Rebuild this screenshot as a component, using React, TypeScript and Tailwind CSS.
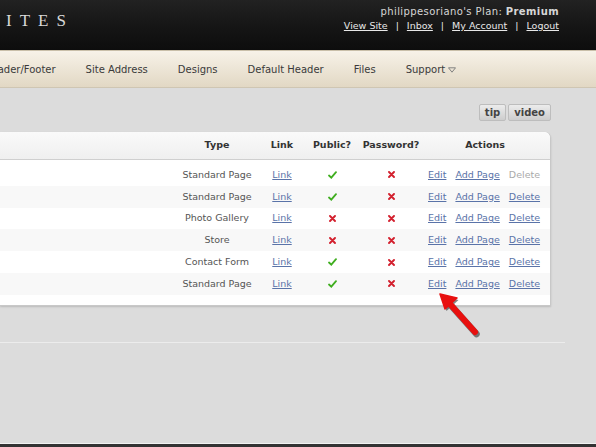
import React from 'react'

const NAV = ['Header/Footer', 'Site Address', 'Designs', 'Default Header', 'Files']

type Row = { type: string; pub: boolean; del: boolean }

const ROWS: Row[] = [
  { type: 'Standard Page', pub: true, del: false },
  { type: 'Standard Page', pub: true, del: true },
  { type: 'Photo Gallery', pub: false, del: true },
  { type: 'Store', pub: false, del: true },
  { type: 'Contact Form', pub: true, del: true },
  { type: 'Standard Page', pub: true, del: true },
]

function Check() {
  return (
    <svg width="9" height="8" viewBox="0 0 9 8" className="inline-block">
      <path d="M1 4.5 L3.3 6.6 L8 1.2" fill="none" stroke="#3fae1f" strokeWidth="1.8" strokeLinecap="round" />
    </svg>
  )
}

function Cross() {
  return (
    <svg width="7" height="7" viewBox="0 0 7 7" className="inline-block">
      <path d="M1 1 L6 6 M6 1 L1 6" fill="none" stroke="#d3202e" strokeWidth="1.9" strokeLinecap="round" />
    </svg>
  )
}

const link = 'text-[#5a73a8] underline underline-offset-1'

export default function App() {
  return (
    <div className="relative w-[596px] h-[447px] overflow-hidden bg-[#dcdcdc] flex flex-col font-['DejaVu_Sans',sans-serif]">
      <header className="h-[50px] shrink-0 bg-gradient-to-b from-[#222] via-[#161616] to-[#0d0d0d] flex justify-between pl-[6px] pr-[37px]">
        <div className="pt-[8px] text-[17px] tracking-[8px] text-[#d8d8d8] font-['Liberation_Serif',serif]">ITES</div>
        <div className="flex flex-col items-end pt-[5px] text-[#d6d6d6]">
          <div className="text-[10px] tracking-[0.4px] leading-[14px]">
            philippesoriano's Plan: <span className="font-bold">Premium</span>
          </div>
          <div className="flex gap-[8px] text-[9.5px] leading-[13px] text-[#e8e8e8]">
            <span className="underline">View Site</span>
            <span>|</span>
            <span className="underline">Inbox</span>
            <span>|</span>
            <span className="underline">My Account</span>
            <span>|</span>
            <span className="underline">Logout</span>
          </div>
        </div>
      </header>

      <nav className="h-[38px] shrink-0 bg-gradient-to-b from-[#f7f2e8] to-[#e2d8c4] border-t border-[#c9bfa9] border-b border-b-[#cfc6b3] flex items-center gap-[30px] ml-[-16px] pt-px text-[10px] text-[#3a3a3a]">
        {NAV.map(n => (
          <span key={n} className="whitespace-nowrap">{n}</span>
        ))}
        <span className="flex items-center gap-[3px] whitespace-nowrap">
          Support
          <svg width="8" height="6" viewBox="0 0 8 6">
            <path d="M0.5 0.8 L7.5 0.8 L4 5.2 Z" fill="none" stroke="#777" strokeWidth="0.9" />
          </svg>
        </span>
      </nav>

      <main className="flex-1 flex flex-col">
        <div className="flex justify-end gap-[2px] pr-[45px] pt-[16px] h-[44px]">
          {['tip', 'video'].map(b => (
            <span
              key={b}
              className="h-[17px] px-[5px] flex items-center rounded-[2px] border border-[#bdbdbd] bg-gradient-to-b from-[#ececec] to-[#cdcdcd] text-[10px] font-bold text-[#444]"
            >
              {b}
            </span>
          ))}
        </div>

        <div className="w-[551px] bg-white rounded-tr-[6px] border-r border-b border-[#c8c8c8] shadow-[0_1px_2px_rgba(0,0,0,0.15)] pb-[10px] text-[9.5px]">
          <div className="flex h-[28px] items-center bg-gradient-to-b from-[#fafafa] to-[#efefef] border-b border-[#cfcfcf] rounded-tr-[6px] font-bold text-[#333] mb-[4px]">
            <span className="w-[180px]" />
            <span className="w-[74px] text-center">Type</span>
            <span className="w-[56px] text-center">Link</span>
            <span className="w-[44px] text-center">Public?</span>
            <span className="w-[74px] text-center">Password?</span>
            <span className="w-[114px] text-center">Actions</span>
          </div>
          {ROWS.map((r, i) => (
            <div key={i} className={`flex h-[21.8px] items-center ${i % 2 === 0 ? 'bg-white' : 'bg-[#f8f8f8]'}`}>
              <span className="w-[180px]" />
              <span className="w-[74px] text-center text-[#555] whitespace-nowrap">{r.type}</span>
              <span className="w-[56px] text-center"><span className={link}>Link</span></span>
              <span className="w-[44px] flex justify-center">{r.pub ? <Check /> : <Cross />}</span>
              <span className="w-[74px] flex justify-center"><Cross /></span>
              <span className="flex gap-[9px] whitespace-nowrap">
                <span className={link}>Edit</span>
                <span className={link}>Add Page</span>
                <span className={r.del ? link : 'text-[#aaa]'}>Delete</span>
              </span>
            </div>
          ))}
        </div>

        <div className="mt-[36px] w-[565px] h-px bg-[#ececec]" />
      </main>

      <footer className="h-[4px] shrink-0 border-t border-[#f2f2f2] bg-[#333]" />

      <svg className="absolute left-[430px] top-[288px]" width="60" height="56" viewBox="0 0 60 56">
        <g transform="translate(1.5,2)" opacity="0.55">
          <path d="M45 44 L20 16" stroke="#222" strokeWidth="6.5" strokeLinecap="round" />
          <path d="M10 6 L27 10 L15 21 Z" fill="#222" />
        </g>
        <path d="M45 44 L20 16" stroke="#e8100f" strokeWidth="6" strokeLinecap="round" />
        <path d="M10 6 L27 10 L15 21 Z" fill="#e8100f" stroke="#e8100f" strokeLinejoin="round" strokeWidth="1.5" />
      </svg>
    </div>
  )
}
